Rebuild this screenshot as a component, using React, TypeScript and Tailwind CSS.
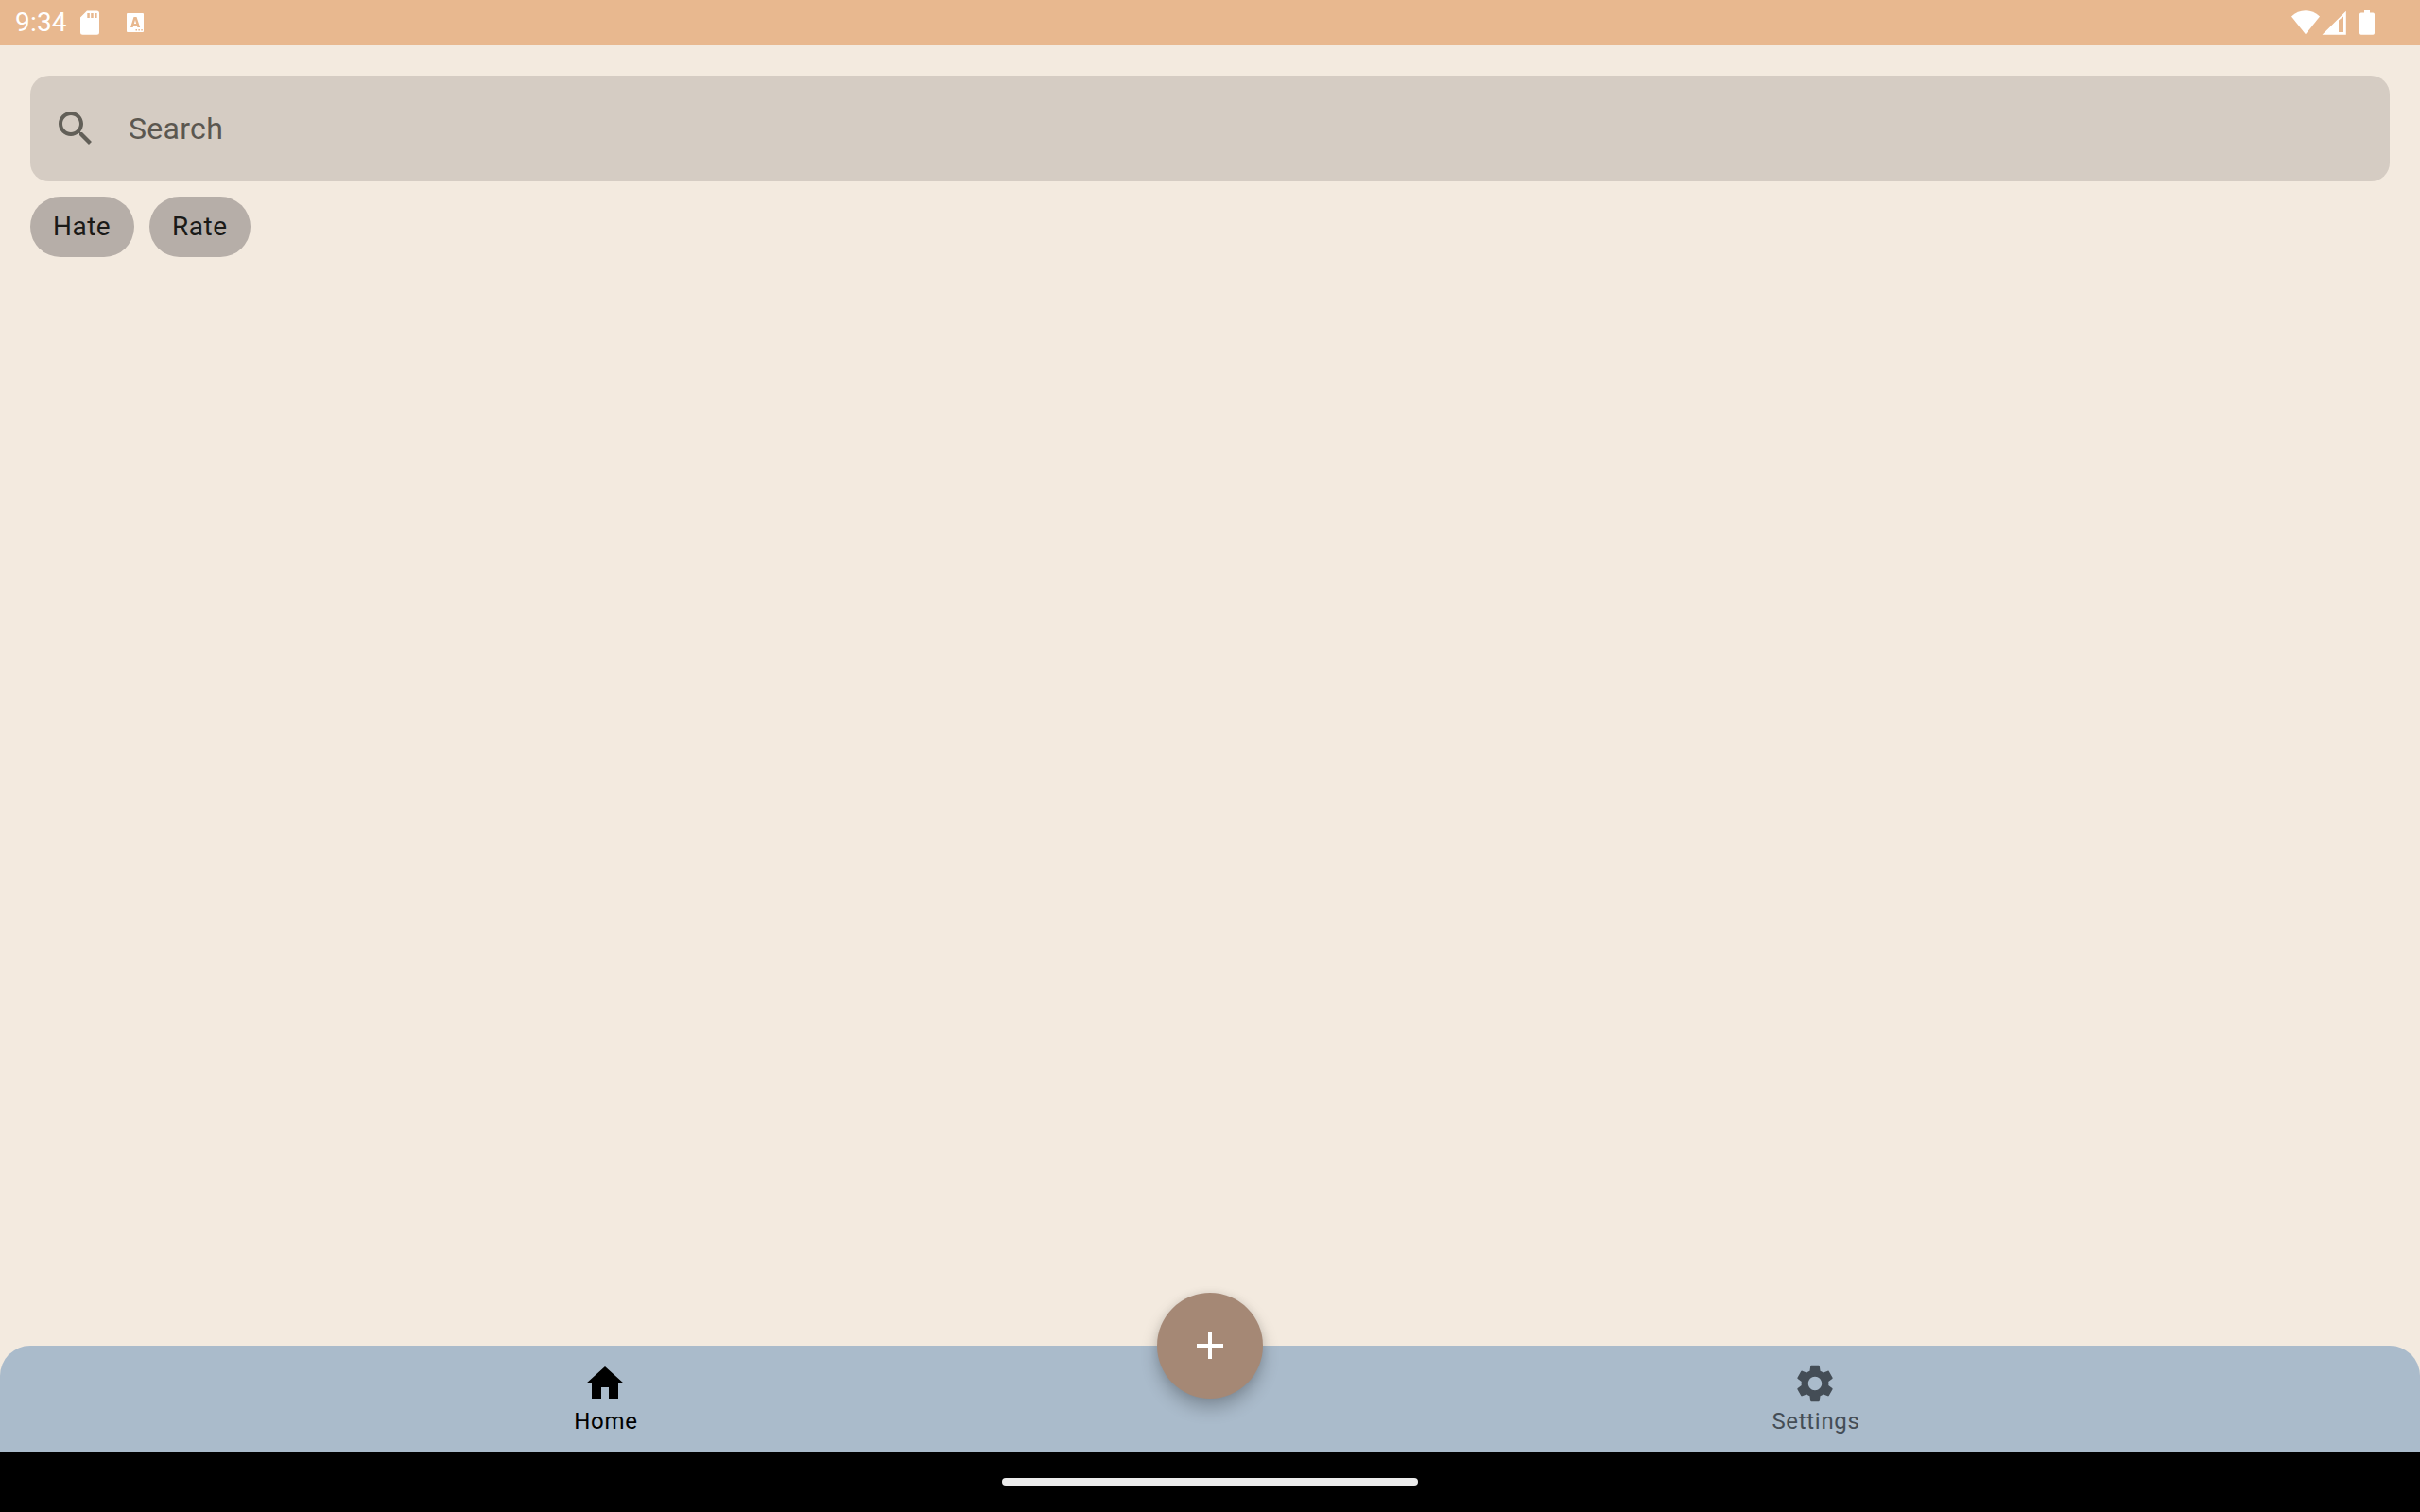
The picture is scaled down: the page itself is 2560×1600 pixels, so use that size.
import type { ReactNode } from "react";

function Icon({ d, className }: { d: string; className: string }) {
  return (
    <svg viewBox="0 0 24 24" className={className} fill="currentColor" aria-hidden="true">
      <path d={d} />
    </svg>
  );
}

const SEARCH =
  "M15.5 14h-.79l-.28-.27C15.41 12.59 16 11.11 16 9.5 16 5.91 13.09 3 9.5 3S3 5.91 3 9.5 5.91 16 9.5 16c1.61 0 3.09-.59 4.23-1.57l.27.28v.79l5 4.99L20.49 19l-4.99-5zm-6 0C7.01 14 5 11.99 5 9.5S7.01 5 9.5 5 14 7.01 14 9.5 11.99 14 9.5 14z";
const HOME = "M10 20v-6h4v6h5v-8h3L12 3 2 12h3v8z";
const SETTINGS =
  "M19.14 12.94c.04-.3.06-.61.06-.94 0-.32-.02-.64-.07-.94l2.03-1.58c.18-.14.23-.41.12-.61l-1.92-3.32c-.12-.22-.37-.29-.59-.22l-2.39.96c-.5-.38-1.03-.7-1.62-.94l-.36-2.54c-.04-.24-.24-.41-.48-.41h-3.84c-.24 0-.43.17-.47.41l-.36 2.54c-.59.24-1.13.57-1.62.94l-2.39-.96c-.22-.08-.47 0-.59.22L2.74 8.87c-.12.21-.08.47.12.61l2.03 1.58c-.05.3-.09.63-.09.94s.02.64.07.94l-2.03 1.58c-.18.14-.23.41-.12.61l1.92 3.32c.12.22.37.29.59.22l2.39-.96c.5.38 1.03.7 1.62.94l.36 2.54c.05.24.24.41.48.41h3.84c.24 0 .44-.17.47-.41l.36-2.54c.59-.24 1.13-.56 1.62-.94l2.39.96c.22.08.47 0 .59-.22l1.92-3.32c.12-.22.07-.47-.12-.61l-2.01-1.58zM12 15.6c-1.98 0-3.6-1.62-3.6-3.6s1.62-3.6 3.6-3.6 3.6 1.62 3.6 3.6-1.62 3.6-3.6 3.6z";
const PLUS = "M19 13h-6v6h-2v-6H5v-2h6V5h2v6h6z";

function StatusBar() {
  return (
    <header className="flex h-12 shrink-0 items-start bg-[#e8b88f] pl-4 pr-12 text-white">
      <span className="w-[69px] text-[28px] leading-[47px] tracking-[0.2px]">9:34</span>
      <svg className="mt-[11px] h-[26px] w-5" viewBox="0 0 20 26" fill="currentColor">
        <path
          fillRule="evenodd"
          d="M7 .5h10.500a2.500 2.500 0 0 1 2.500 2.500v20.200a2.500 2.500 0 0 1-2.500 2.500h-15a2.500 2.500 0 0 1-2.500-2.500V7.500zM7.300 3v5h2.500V3zM11.200 3v5h2.500V3zM15.100 3v5h2.500V3z"
        />
      </svg>
      <svg className="ml-[29px] mt-[14px] h-5 w-[18px]" viewBox="0 0 18 20" fill="currentColor">
        <path
          fillRule="evenodd"
          d="M1 0h16q1 0 1 1v18q0 1-1 1H1q-1 0-1-1V1Q0 0 1 0zM7.500 4L4 15h2.700l.6-2h3.500l.6 2h2.800L10.500 4zM9 7l1.100 4H7.900zM9.500 17v1.500H11V17zM12.400 17v1.500h1.500V17zM15.300 17v1.500h1.500V17z"
        />
      </svg>
      <svg className="ml-auto mt-[11px] h-[26px] w-[30px]" viewBox="0 0 30 26" fill="currentColor">
        <path d="M0 6.500Q6.500.3 15 .3T30 6.500L15 25.200z" />
      </svg>
      <svg className="ml-[2px] mt-[11px] h-[26px] w-[26px]" viewBox="0 0 26 26" fill="currentColor">
        <path fillRule="evenodd" d="M.5 25.800L25.800.8v25zM18 10.500v12.500h5V6.500z" />
      </svg>
      <svg className="ml-[14px] mt-[11px] h-[26px] w-4" viewBox="0 0 16 26" fill="currentColor">
        <path d="M5 0h6v2.500h3.300Q16 2.500 16 4.200v19.900q0 1.700-1.700 1.700H1.700Q0 25.800 0 24.100V4.200Q0 2.500 1.700 2.500H5z" />
      </svg>
    </header>
  );
}

function Chip({ children, className }: { children: ReactNode; className: string }) {
  return (
    <button
      className={`flex h-16 items-center rounded-full bg-[#b6aea8] pl-6 text-[28px] leading-10 tracking-[0.5px] text-[#1a1a18] ${className}`}
    >
      {children}
    </button>
  );
}

function NavItem({ icon, label, className }: { icon: string; label: string; className: string }) {
  return (
    <button className={`flex h-full flex-1 flex-col items-center pt-4 ${className}`}>
      <Icon d={icon} className="size-12" />
      <span className="pl-0.5 text-[24px] leading-8 tracking-[0.7px]">{label}</span>
    </button>
  );
}

export default function App() {
  return (
    <div className="flex h-[1600px] w-[2560px] flex-col overflow-hidden bg-[#f3eadf] font-[Roboto,sans-serif]">
      <StatusBar />
      <main className="flex flex-1 flex-col gap-4 px-8 pt-8">
        <div className="flex h-28 items-center rounded-[20px] bg-[#d5ccc3] pl-6 text-[#625f58]">
          <Icon d={SEARCH} className="size-12" />
          <span className="ml-8 text-[32px] leading-12 tracking-[0.3px] text-[#5b5750]">Search</span>
        </div>
        <div className="flex gap-4">
          <Chip className="w-[110px]">Hate</Chip>
          <Chip className="w-[107px]">Rate</Chip>
        </div>
      </main>
      <nav className="relative flex h-28 shrink-0 rounded-t-[32px] bg-[#aabbcb]">
        <NavItem icon={HOME} label="Home" className="text-black" />
        <NavItem icon={SETTINGS} label="Settings" className="text-[#444d56]" />
        <button className="absolute -top-14 left-1/2 flex size-28 -translate-x-1/2 items-center justify-center rounded-full bg-[#a58875] text-white shadow-[0_10px_18px_rgba(0,0,0,0.24),0_0_8px_rgba(0,0,0,0.08)]">
          <Icon d={PLUS} className="size-12" />
        </button>
      </nav>
      <footer className="flex h-16 shrink-0 items-center justify-center bg-black">
        <div className="h-2 w-[440px] rounded-full bg-[#ebebeb]" />
      </footer>
    </div>
  );
}
